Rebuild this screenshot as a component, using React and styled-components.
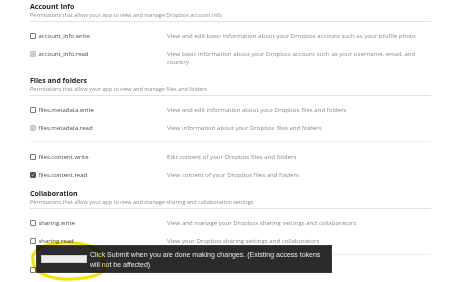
import styled, { createGlobalStyle } from 'styled-components';

const GlobalStyle = createGlobalStyle`
  html, body {
    margin: 0;
    padding: 0;
    background: #ffffff;
  }
  body {
    width: 450px;
    height: 282px;
    overflow: hidden;
    font-family: "Open Sans", "Noto Sans", sans-serif;
  }
`;

const Page = styled.div`
  position: relative;
  width: 450px;
  height: 282px;
  overflow: hidden;
`;

const Content = styled.div`
  width: 401px;
  margin-left: 30px;
`;

const Section = styled.section`
  padding-top: 2px;
`;

const SectionHeader = styled.header`
  padding-bottom: 2px;
  border-bottom: 1px solid #e2e2e2;
`;

const Heading = styled.h3`
  margin: 0;
  font-size: 7px;
  line-height: 9px;
  font-weight: 700;
  color: #1e1e1e;
`;

const Sub = styled.p`
  margin: 0;
  font-size: 5.5px;
  line-height: 8px;
  color: #8d8d8d;
`;

const Rows = styled.div`
  padding-top: 5px;
  padding-bottom: 3px;
`;

const Group = styled.div`
  & + & {
    margin-top: 4px;
    padding-top: 6px;
    border-top: 1px solid #ececec;
  }
`;

const Row = styled.div`
  display: grid;
  grid-template-columns: 137px 1fr;
  padding: 5px 0;
  line-height: 8px;
`;

const Label = styled.label`
  display: flex;
  align-items: center;
  gap: 3px;
  height: 8px;
  font-size: 6px;
  color: #4a4a4a;
`;

const Box = styled.span`
  display: inline-flex;
  align-items: center;
  justify-content: center;
  box-sizing: border-box;
  width: 5.5px;
  height: 5.5px;
  border-radius: 1px;
  border: 0.8px solid ${p => (p.$state === 'on' ? '#555' : p.$state === 'locked' ? '#c4c4c4' : '#777')};
  background: ${p => (p.$state === 'on' ? '#555' : p.$state === 'locked' ? '#d9d9d9' : '#fff')};
  svg {
    width: 4px;
    height: 4px;
  }
`;

const Desc = styled.span`
  font-size: 6.1px;
  color: #8a8a8a;
  padding-right: 12px;
`;

const Tip = styled.div`
  position: absolute;
  left: 36px;
  top: 245px;
  width: 296px;
  height: 28px;
  box-sizing: border-box;
  display: flex;
  align-items: flex-start;
  gap: 3px;
  padding: 4px 4px 0 4px;
  background: #2b2b2b;
  border: 1px solid #3a3a3a;
`;

const TipButton = styled.span`
  flex: none;
  width: 46px;
  height: 8px;
  margin-top: 5px;
  background: #ececec;
  border: 1px solid #d0d0d0;
  box-sizing: border-box;
`;

const TipText = styled.p`
  margin: 0;
  font-family: "Liberation Sans", Arial, sans-serif;
  font-size: 7px;
  line-height: 10px;
  color: #e8e8e8;
`;

const Marker = styled.svg`
  position: absolute;
  left: 0;
  top: 0;
  mix-blend-mode: multiply;
  pointer-events: none;
`;

function Check({ state }) {
  return (
    <Box $state={state}>
      {state !== 'off' && (
        <svg viewBox="0 0 10 10">
          <path d="M2 5.2l2 2L8.2 2.8" fill="none" stroke={state === 'on' ? '#fff' : '#9a9a9a'} strokeWidth="1.8" />
        </svg>
      )}
    </Box>
  );
}

const sections = [
  {
    title: 'Account Info',
    sub: 'Permissions that allow your app to view and manage Dropbox account info',
    groups: [
      [
        ['account_info.write', 'View and edit basic information about your Dropbox account such as your profile photo', 'off'],
        ['account_info.read', 'View basic information about your Dropbox account such as your username, email, and country', 'locked'],
      ],
    ],
  },
  {
    title: 'Files and folders',
    sub: 'Permissions that allow your app to view and manage files and folders',
    groups: [
      [
        ['files.metadata.write', 'View and edit information about your Dropbox files and folders', 'off'],
        ['files.metadata.read', 'View information about your Dropbox files and folders', 'locked'],
      ],
      [
        ['files.content.write', 'Edit content of your Dropbox files and folders', 'off'],
        ['files.content.read', 'View content of your Dropbox files and folders', 'on'],
      ],
    ],
  },
  {
    title: 'Collaboration',
    sub: 'Permissions that allow your app to view and manage sharing and collaboration settings',
    groups: [
      [
        ['sharing.write', 'View and manage your Dropbox sharing settings and collaborators', 'off'],
        ['sharing.read', 'View your Dropbox sharing settings and collaborators', 'off'],
      ],
      [
        ['file_requests.write', 'View and manage your Dropbox file requests', 'off'],
      ],
    ],
  },
];

export default function App() {
  return (
    <Page>
      <GlobalStyle />
      <Content>
        {sections.map(s => (
          <Section key={s.title}>
            <SectionHeader>
              <Heading>{s.title}</Heading>
              <Sub>{s.sub}</Sub>
            </SectionHeader>
            <Rows>
              {s.groups.map((g, i) => (
                <Group key={i}>
                  {g.map(([name, desc, state]) => (
                    <Row key={name}>
                      <Label>
                        <Check state={state} />
                        {name}
                      </Label>
                      <Desc>{desc}</Desc>
                    </Row>
                  ))}
                </Group>
              ))}
            </Rows>
          </Section>
        ))}
      </Content>
      <Tip>
        <TipButton />
        <TipText>
          Click Submit when you are done making changes. (Existing access tokens
          <br />
          will not be affected)
        </TipText>
      </Tip>
      <Marker width="450" height="282" viewBox="0 0 450 282">
        <path
          d="M86 245 C96 247 104 256 105 266 C105 274 92 278 72 279 C50 280 35 273 33 262 C31 252 38 245 58 243 C70 242 80 243 90 246"
          fill="none"
          stroke="#f2e600"
          strokeWidth="3.2"
          strokeLinecap="round"
        />
      </Marker>
    </Page>
  );
}
